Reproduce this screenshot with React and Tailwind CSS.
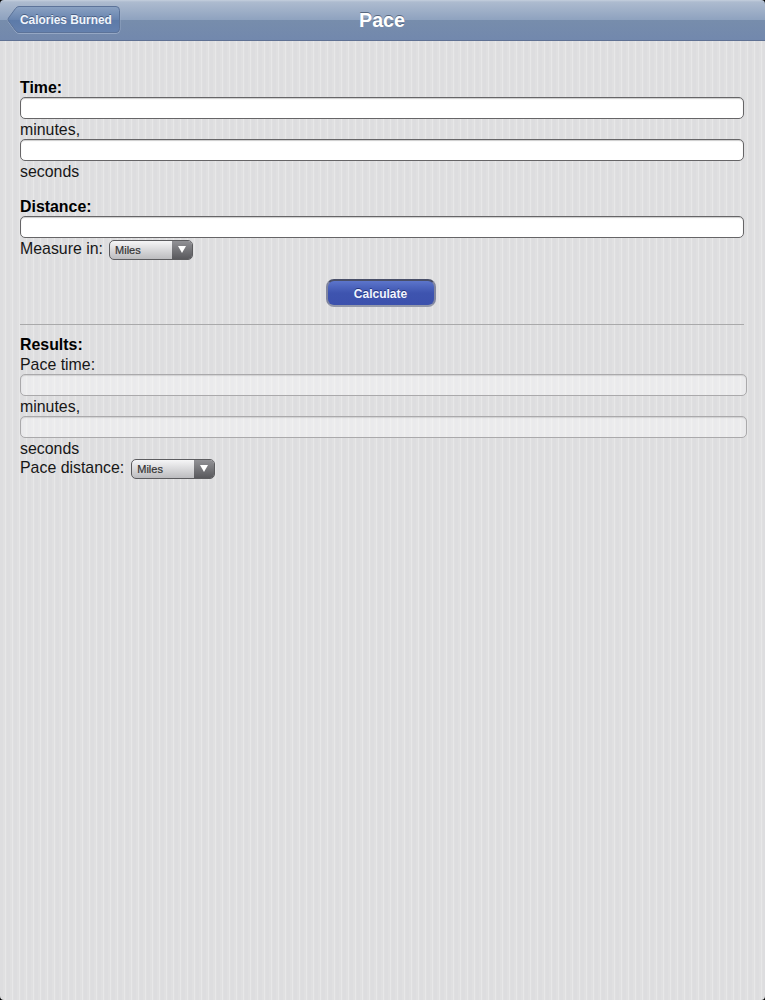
import React from 'react';

const Field = ({ label, disabled = false }) => (
  <input
    type="text"
    aria-label={label}
    disabled={disabled}
    className={
      disabled
        ? 'block h-[22px] w-[727px] rounded-[5px] border border-[#aaa9ab] bg-white/40 px-1 shadow-[inset_0_1px_1px_rgba(0,0,0,0.12)]'
        : 'block h-[22px] w-[724px] rounded-[5px] border border-[#666567] bg-white px-1 shadow-[inset_0_1px_1px_rgba(0,0,0,0.2)]'
    }
  />
);

const UnitSelect = () => (
  <button
    type="button"
    className="flex h-5 w-[84px] overflow-hidden rounded-[5px] border border-[#5c5c5f] bg-linear-to-b from-[#f6f6f7] to-[#bcbcbf] text-left text-[11px] leading-[19px] text-[#333]"
  >
    <span className="flex-1 pl-[5px] [-webkit-text-stroke:0.2px_#333]">Miles</span>
    <span className="flex w-5 items-center justify-center bg-linear-to-b from-[#929296] to-[#59595d]">
      <svg width="8" height="7" viewBox="0 0 8 7" className="-mt-px">
        <path d="M0 0H8L4 7Z" fill="#fff" />
      </svg>
    </span>
  </button>
);

const NavBar = ({ title, back }) => (
  <header className="relative flex h-[41px] items-start border-b border-[#5f7193] bg-[linear-gradient(to_bottom,#c4cfdd_0px,#adbbcf_2px,#8ea2bf_20px,#778dac_20px,#7288ad_40px)] pt-[6px] pl-[7px]">
    <button type="button" className="relative h-[28px] w-[114px]">
      <svg width="114" height="28" viewBox="0 0 114 28" className="block">
        <defs>
          <linearGradient id="backFill" x1="0" y1="0" x2="0" y2="1">
            <stop offset="0" stopColor="#8ba2c3" />
            <stop offset="0.5" stopColor="#6884af" />
            <stop offset="0.52" stopColor="#5c7aa8" />
            <stop offset="1" stopColor="#6581ae" />
          </linearGradient>
        </defs>
        <path
          d="M12 1.5H109Q113 1.5 113 5.5V23.5Q113 27.5 109 27.5H12Q10 27.5 8.500 25.500L1.500 16Q0.500 14.500 1.500 13L8.500 3.500Q10 1.500 12 1.500Z"
          fill="none"
          stroke="#a4b4cd"
          strokeOpacity="0.7"
        />
        <path
          d="M12 0.500H109Q112.500 0.500 112.500 4.500V22.500Q112.500 26.500 109 26.500H12Q10 26.500 8.500 24.500L1.500 15Q0.500 13.500 1.500 12L8.500 2.500Q10 0.500 12 0.500Z"
          fill="url(#backFill)"
          stroke="#5c7399"
        />
      </svg>
      <span className="absolute top-0 left-[13px] text-[11.900px] leading-7 font-bold whitespace-nowrap text-[#f0f5fc] [text-shadow:0_-1px_0_#4a5f83]">
        {back}
      </span>
    </button>
    <h1 className="absolute inset-x-0 top-0 -ml-px text-center text-[19.700px] leading-10 font-bold text-white [text-shadow:0_-1px_0_#56677f]">
      {title}
    </h1>
    {/* rounded screen corners */}
    <svg width="5" height="5" viewBox="0 0 5 5" className="absolute top-0 left-0">
      <path d="M0 0H4Q0 0 0 4Z" fill="#000" />
    </svg>
    <svg width="5" height="5" viewBox="0 0 5 5" className="absolute top-0 right-0">
      <path d="M5 0H1Q5 0 5 4Z" fill="#000" />
    </svg>
  </header>
);

export default function App() {
  return (
    <div className="relative h-[1000px] w-[765px] overflow-hidden bg-[#dededf] bg-[repeating-linear-gradient(to_right,#dddddf_0px,#dddddf_3px,#e0e0e1_3px,#e0e0e1_5px,#e7e7e8_5px,#e7e7e8_6px,#dfdfe0_6px,#dfdfe0_7px)] font-['Liberation_Sans',Arial,sans-serif] text-[15.900px] leading-5 text-[#171717]">
      <NavBar title="Pace" back="Calories Burned" />

      <main className="pt-9 pl-5">
        <section className="h-[119px]">
          <h2 className="pt-px font-bold text-black -mb-px">Time:</h2>
          <Field label="minutes" />
          <p className="pt-px -mb-px">minutes,</p>
          <Field label="seconds" />
          <p className="pt-px">seconds</p>
        </section>

        <section>
          <h2 className="h-5 pt-px font-bold text-black">Distance:</h2>
          <Field label="distance" />
          <div className="mt-px flex h-[22px] items-center gap-[6px]">
            <span className="-mt-[2px]">Measure in:</span>
            <UnitSelect />
          </div>
        </section>

        <div className="flex w-[721px] justify-center pt-[18px] pb-[17px]">
          <button
            type="button"
            className="h-7 w-[110px] rounded-[8px] border-2 border-t-[#494f69] border-r-[#8186a0] border-b-[#9398aa] border-l-[#8186a0] bg-linear-to-b from-[#5c75cb] via-[#3e54af] to-[#3c51ad] pt-px text-xs font-bold text-[#f1f4ff] [text-shadow:0_-1px_0_#26367d]"
          >
            Calculate
          </button>
        </div>

        <hr className="w-[724px] border-t border-[#a9a9aa]" />

        <section className="pt-[9px]">
          <h2 className="pt-px -mb-px font-bold text-black">Results:</h2>
          <p className="pt-px -mb-px">Pace time:</p>
          <Field label="pace minutes" disabled />
          <p className="pt-px -mb-px">minutes,</p>
          <Field label="pace seconds" disabled />
          <p className="pt-px -mb-px">seconds</p>
          <div className="flex h-[22px] items-center gap-[7px]">
            <span className="-mt-[2px]">Pace distance:</span>
            <UnitSelect />
          </div>
        </section>
      </main>

      <svg width="4" height="4" viewBox="0 0 4 4" className="absolute bottom-0 left-0">
        <path d="M0 0Q0 4 4 4H0Z" fill="#000" />
      </svg>
      <svg width="4" height="4" viewBox="0 0 4 4" className="absolute right-0 bottom-0">
        <path d="M4 0Q4 4 0 4H4Z" fill="#000" />
      </svg>
    </div>
  );
}
